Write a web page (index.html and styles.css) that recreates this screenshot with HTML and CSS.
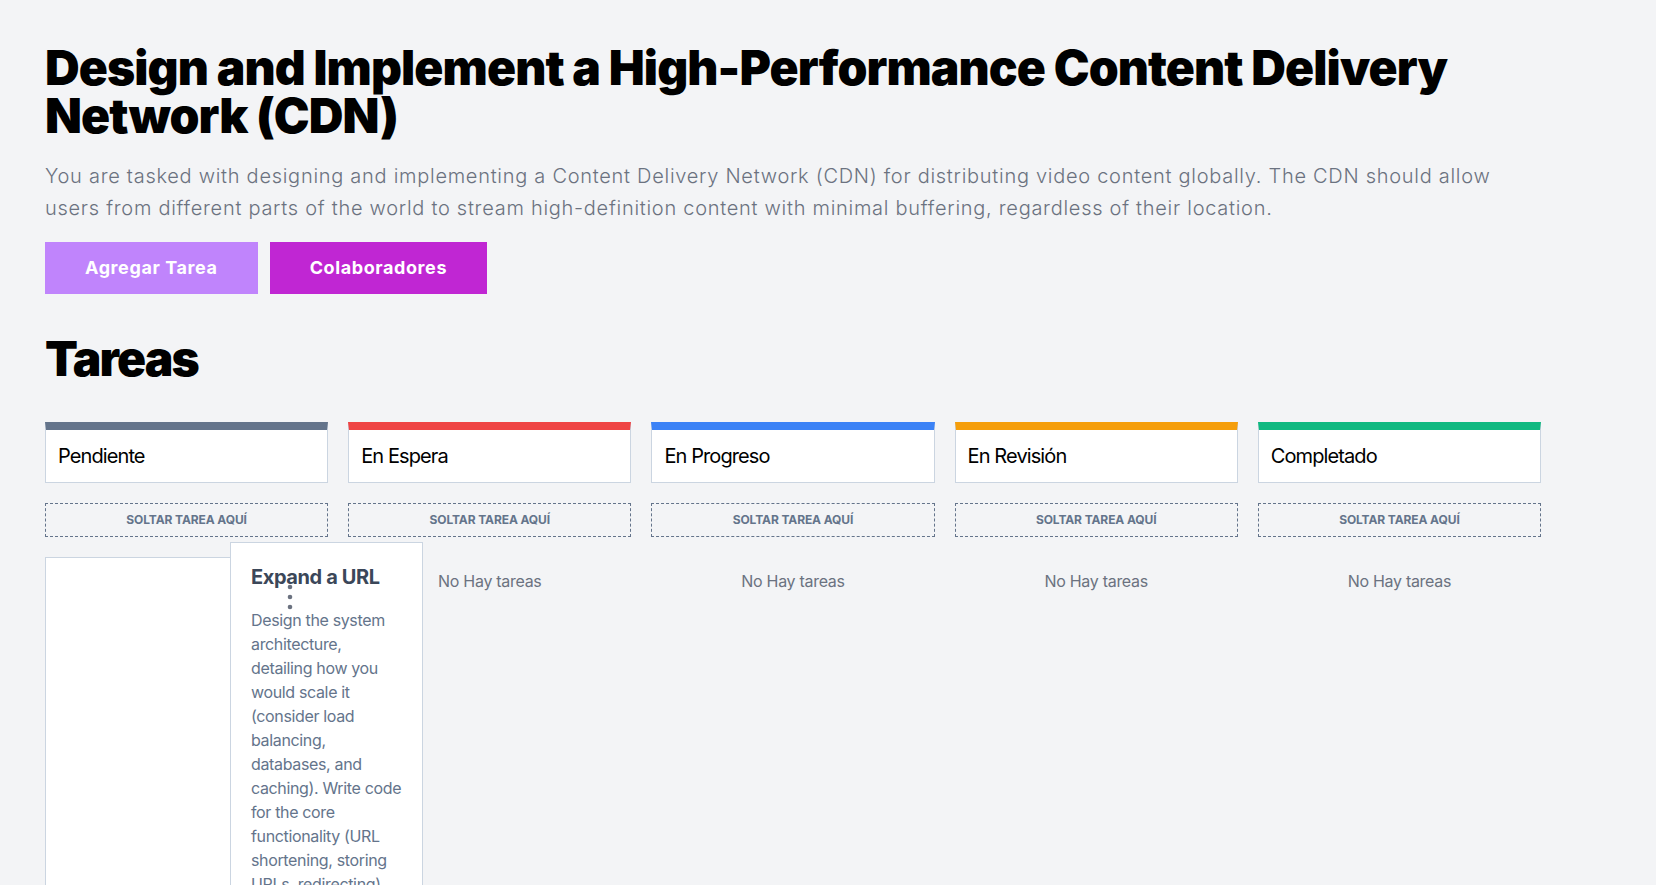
FILE: index.html
```html
<!DOCTYPE html>
<html lang="es">
<head>
<meta charset="utf-8">
<title>Tareas</title>
<link rel="stylesheet" href="styles.css">
</head>
<body>
<main class="page">
  <h1 class="title">Design and Implement a High-Performance Content Delivery Network (CDN)</h1>
  <p class="desc">You are tasked with designing and implementing a Content Delivery Network (CDN) for distributing video content globally. The CDN should allow users from different parts of the world to stream high-definition content with minimal buffering, regardless of their location.</p>
  <div class="actions">
    <button class="btn btn-add">Agregar Tarea</button>
    <button class="btn btn-collab">Colaboradores</button>
  </div>
  <h2 class="section">Tareas</h2>
  <div class="board">
    <section class="column">
      <div class="col-head head-slate">Pendiente</div>
      <div class="dropzone">Soltar tarea aquí</div>
      <div class="cards">
        <div class="card-base"></div>
        <article class="card-drag">
          <h3 class="card-title">Expand a URL</h3>
          <svg class="card-menu" width="8" height="26" viewBox="0 0 8 26" aria-hidden="true">
            <circle cx="4" cy="3" r="2.3" fill="#6b7280"/>
            <circle cx="4" cy="13" r="2.3" fill="#6b7280"/>
            <circle cx="4" cy="23" r="2.3" fill="#6b7280"/>
          </svg>
          <p class="card-text">Design the system architecture, detailing how you would scale it (consider load balancing, databases, and caching). Write code for the core functionality (URL shortening, storing URLs, redirecting).</p>
        </article>
      </div>
    </section>
    <section class="column">
      <div class="col-head head-red">En Espera</div>
      <div class="dropzone">Soltar tarea aquí</div>
      <div class="empty">No Hay tareas</div>
    </section>
    <section class="column">
      <div class="col-head head-blue">En Progreso</div>
      <div class="dropzone">Soltar tarea aquí</div>
      <div class="empty">No Hay tareas</div>
    </section>
    <section class="column">
      <div class="col-head head-amber">En Revisión</div>
      <div class="dropzone">Soltar tarea aquí</div>
      <div class="empty">No Hay tareas</div>
    </section>
    <section class="column">
      <div class="col-head head-green">Completado</div>
      <div class="dropzone">Soltar tarea aquí</div>
      <div class="empty">No Hay tareas</div>
    </section>
  </div>
</main>
</body>
</html>
```
FILE: styles.css
```css
* { box-sizing: border-box; }

html, body {
  margin: 0;
  background: #f3f4f6;
  font-family: Inter, "Liberation Sans", sans-serif;
  color: #000;
  overflow: hidden;
}

.page {
  width: 1496px;
  padding: 44px 0 0 45px;
  box-sizing: content-box;
}

.title {
  margin: 0;
  font-size: 48px;
  line-height: 48px;
  font-weight: 900;
  letter-spacing: -0.9px;
}

.desc {
  margin: 20px 0 0;
  font-size: 20px;
  line-height: 32px;
  font-weight: 300;
  letter-spacing: 0.72px;
  color: #6b7280;
}

.actions {
  display: flex;
  gap: 12px;
  margin-top: 18px;
}

.btn {
  border: none;
  padding: 12px 40px;
  font-family: inherit;
  font-size: 18px;
  line-height: 28px;
  font-weight: 700;
  letter-spacing: 0.6px;
  color: #fff;
  cursor: pointer;
}

.btn-add { background: #c084fc; }
.btn-collab { background: #c026d3; }

.section {
  margin: 41px 0 0;
  font-size: 48px;
  line-height: 48px;
  font-weight: 900;
  letter-spacing: -1.8px;
}

.board {
  margin-top: 39px;
  display: grid;
  grid-template-columns: repeat(5, 1fr);
  gap: 20px;
}

.column {
  display: flex;
  flex-direction: column;
  gap: 20px;
}

.col-head {
  background: #fff;
  border: 1px solid #cbd5e1;
  border-top: 8px solid #64748b;
  padding: 12px;
  font-size: 20px;
  line-height: 28px;
  font-weight: 400;
  letter-spacing: -0.9px;
  color: #000;
}

.head-slate { border-top-color: #64748b; }
.head-red { border-top-color: #ef4444; }
.head-blue { border-top-color: #3b82f6; }
.head-amber { border-top-color: #f59e0b; }
.head-green { border-top-color: #10b981; }

.dropzone {
  border: 1px dashed #64748b;
  padding: 8px;
  text-align: center;
  font-size: 12px;
  line-height: 16px;
  font-weight: 700;
  letter-spacing: -0.1px;
  text-transform: uppercase;
  color: #64748b;
}

.empty {
  padding-top: 12px;
  text-align: center;
  font-size: 16px;
  line-height: 24px;
  letter-spacing: -0.3px;
  color: #6b7280;
}

.cards {
  position: relative;
}

.card-base {
  height: 420px;
  background: #fff;
  border: 1px solid #cbd5e1;
}

.card-drag {
  position: absolute;
  left: 185px;
  top: -15px;
  width: 193px;
  padding: 20px;
  background: #fff;
  border: 1px solid #cbd5e1;
}

.card-title {
  margin: 0 0 17px;
  font-size: 20px;
  line-height: 28px;
  font-weight: 700;
  letter-spacing: -0.4px;
  color: #3b4759;
}

.card-menu {
  position: absolute;
  left: 55px;
  top: 41px;
}

.card-text {
  margin: 0;
  font-size: 16px;
  line-height: 24px;
  letter-spacing: -0.35px;
  color: #64748b;
}
```
